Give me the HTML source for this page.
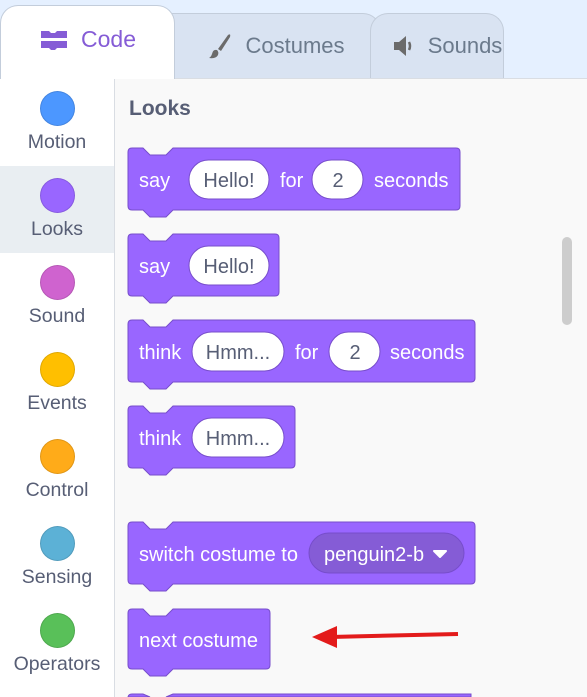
<!DOCTYPE html>
<html style="height:697px;overflow:hidden"><head><meta charset="utf-8"><style>
body{margin:0;width:587px;height:697px;overflow:hidden;background:#e5f0ff;font-family:"Liberation Sans",sans-serif;position:relative}
.tab{position:absolute;border:1px solid #c3cddb;border-bottom:none;border-radius:18px 18px 0 0;background:#d9e3f2;color:#6b7a8c;font-size:22px;display:flex;align-items:center;justify-content:center;gap:10px}
.side{position:absolute;left:0;top:78px;width:114px;height:619px;background:#fff;border-right:1px solid #d9dde3;border-top:1px solid #d9dde3;overflow:hidden}
.cat{position:absolute;left:0;width:114px;height:87px;text-align:center;color:#575e75;font-size:19.5px}
.cat .c{width:35px;height:35px;border-radius:50%;margin:12px auto 5px;box-sizing:border-box;border:1px solid rgba(0,0,0,.12)}
.pal{position:absolute;left:115px;top:78px;width:472px;height:619px;background:#f9f9f9;border-top:1px solid #d9dde3}
</style></head><body>
<div class="tab" style="left:153px;top:13px;width:228px;height:65px;padding-left:20px;box-sizing:border-box">
<svg width="26" height="26" viewBox="0 0 26 26"><path d="M19 2 Q22 0 21 4 L12 18 L9 16 Z" fill="#6b6b6b"/><path d="M8 17 Q4 16 3 21 Q2 24 0 25 Q7 26 9 22 Q10 19 8 17Z" fill="#6b6b6b"/></svg>Costumes</div>
<div class="tab" style="left:370px;top:13px;width:134px;height:65px;padding-left:20px;box-sizing:border-box">
<svg width="26" height="22" viewBox="0 0 26 22"><path d="M2 7 H7 L14 1 V21 L7 15 H2 Z" fill="#6b6b6b"/><path d="M17 7 Q19 11 17 15" stroke="#6b6b6b" stroke-width="2.5" fill="none"/></svg>Sounds</div>
<div class="tab" style="left:0;top:5px;width:175px;height:74px;background:#fff;color:#855cd6;z-index:2;padding-bottom:6px;box-sizing:border-box;font-size:23px">
<svg width="32" height="22" viewBox="0 0 32 22"><path d="M2 2 H10 L12 4 H16 L18 2 H28 V9 H2Z M2 12 H28 V19 H18 L16 21 H12 L10 19 H2Z" fill="#855cd6"/></svg>Code</div>
<div class="side">
<div class="cat" style="top:0"><div class="c" style="background:#4c97ff"></div>Motion</div>
<div class="cat" style="top:87px;background:#e9eef2"><div class="c" style="background:#9966ff"></div>Looks</div>
<div class="cat" style="top:174px"><div class="c" style="background:#cf63cf"></div>Sound</div>
<div class="cat" style="top:261px"><div class="c" style="background:#ffbf00"></div>Events</div>
<div class="cat" style="top:348px"><div class="c" style="background:#ffab19"></div>Control</div>
<div class="cat" style="top:435px"><div class="c" style="background:#5cb1d6"></div>Sensing</div>
<div class="cat" style="top:522px"><div class="c" style="background:#59c059"></div>Operators</div>
<div class="cat" style="top:609px;height:10px;overflow:hidden"><div class="c" style="background:#ff8c1a"></div></div>
</div>
<div class="pal"></div>
<svg style="position:absolute;left:0;top:0" width="587" height="697" font-family="Liberation Sans, sans-serif" font-size="20">
<text x="129" y="115" font-size="21" font-weight="bold" fill="#575e75">Looks</text>
<rect x="562" y="237" width="10" height="88" rx="5" fill="#cdcdcd"/>
<g fill="#9966ff" stroke="#774dcb" stroke-width="1">
<path d="M128,152 Q128,148 132,148 L143,148 L150,155 L166,155 L173,148 L456,148 Q460,148 460,152 L460,206 Q460,210 456,210 L173,210 L166,217 L150,217 L143,210 L132,210 Q128,210 128,206Z"/>
<path d="M128,238 Q128,234 132,234 L143,234 L150,241 L166,241 L173,234 L275,234 Q279,234 279,238 L279,292 Q279,296 275,296 L173,296 L166,303 L150,303 L143,296 L132,296 Q128,296 128,292Z"/>
<path d="M128,324 Q128,320 132,320 L143,320 L150,327 L166,327 L173,320 L471,320 Q475,320 475,324 L475,378 Q475,382 471,382 L173,382 L166,389 L150,389 L143,382 L132,382 Q128,382 128,378Z"/>
<path d="M128,410 Q128,406 132,406 L143,406 L150,413 L166,413 L173,406 L291,406 Q295,406 295,410 L295,464 Q295,468 291,468 L173,468 L166,475 L150,475 L143,468 L132,468 Q128,468 128,464Z"/>
<path d="M128,526 Q128,522 132,522 L143,522 L150,529 L166,529 L173,522 L471,522 Q475,522 475,526 L475,580 Q475,584 471,584 L173,584 L166,591 L150,591 L143,584 L132,584 Q128,584 128,580Z"/>
<path d="M128,613 Q128,609 132,609 L143,609 L150,616 L166,616 L173,609 L266,609 Q270,609 270,613 L270,665 Q270,669 266,669 L173,669 L166,676 L150,676 L143,669 L132,669 Q128,669 128,665Z"/>
<path d="M128,697 L128,698 Q128,694 132,694 L143,694 L150,697 Z M166,697 L173,694 L471,694 L471,697Z"/>
</g>
<g fill="#fff" stroke="#774dcb">
<rect x="189" y="160" width="80" height="39" rx="19.5"/>
<rect x="312" y="160" width="51" height="39" rx="19.5"/>
<rect x="189" y="246" width="80" height="39" rx="19.5"/>
<rect x="192" y="332" width="92" height="39" rx="19.5"/>
<rect x="329" y="332" width="51" height="39" rx="19.5"/>
<rect x="192" y="418" width="92" height="39" rx="19.5"/>
</g>
<rect x="309" y="533" width="155" height="40" rx="20" fill="#855cd6" stroke="#774dcb"/>
<g fill="#fff">
<text x="139" y="187">say</text><text x="280" y="187">for</text><text x="374" y="187">seconds</text>
<text x="139" y="273">say</text>
<text x="139" y="359">think</text><text x="295" y="359">for</text><text x="390" y="359">seconds</text>
<text x="139" y="445">think</text>
<text x="139" y="561">switch costume to</text>
<text x="324" y="561">penguin2-b</text>
<path d="M434 551 L446 551 L440 557Z" stroke="#fff" stroke-width="2" stroke-linejoin="round"/>
<text x="139" y="647">next costume</text>
</g>
<g fill="#575e75" text-anchor="middle">
<text x="229" y="187">Hello!</text><text x="338" y="187">2</text>
<text x="229" y="273">Hello!</text>
<text x="238" y="359">Hmm...</text><text x="355" y="359">2</text>
<text x="238" y="445">Hmm...</text>
</g>
<line x1="458" y1="634" x2="330" y2="637" stroke="#e31b1b" stroke-width="4"/>
<path d="M312 637 L337 626 L337 648Z" fill="#e31b1b"/>
</svg>
</body></html>
